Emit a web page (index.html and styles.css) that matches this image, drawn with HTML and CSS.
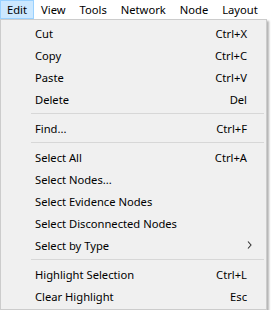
FILE: index.html
```html
<!DOCTYPE html>
<html lang="en">

<head>
    <meta charset="UTF-8">
    <title>Edit Menu</title>
    <link rel="stylesheet" href="styles.css">
</head>

<body>
    <div class="menubar">
        <span class="top-item active">Edit</span>
        <span class="top-item">View</span>
        <span class="top-item">Tools</span>
        <span class="top-item">Network</span>
        <span class="top-item">Node</span>
        <span class="top-item">Layout</span>
    </div>

    <div class="dropdown">
        <div class="item"><span>Cut</span><span class="key">Ctrl+X</span></div>
        <div class="item"><span>Copy</span><span class="key">Ctrl+C</span></div>
        <div class="item"><span>Paste</span><span class="key">Ctrl+V</span></div>
        <div class="item"><span>Delete</span><span class="key">Del</span></div>
        <div class="sep"></div>
        <div class="item"><span>Find...</span><span class="key">Ctrl+F</span></div>
        <div class="sep"></div>
        <div class="item"><span>Select All</span><span class="key">Ctrl+A</span></div>
        <div class="item"><span>Select Nodes...</span></div>
        <div class="item"><span>Select Evidence Nodes</span></div>
        <div class="item"><span>Select Disconnected Nodes</span></div>
        <div class="item"><span>Select by Type</span>
            <svg class="arrow" width="5" height="8" viewBox="0 0 5 8">
                <path d="M1 0.5 L4 4 L1 7.5" fill="none" stroke="#333" stroke-width="1.1"/>
            </svg>
        </div>
        <div class="sep"></div>
        <div class="item"><span>Highlight Selection</span><span class="key">Ctrl+L</span></div>
        <div class="item"><span>Clear Highlight</span><span class="key">Esc</span></div>
    </div>
</body>

</html>
```

FILE: styles.css
```css
body {
    margin: 0;
    background: #ffffff;
    font-family: 'Noto Sans', 'Open Sans', sans-serif;
    font-size: 11.2px;
    color: #000;
}

.menubar {
    display: flex;
    height: 19px;
    background: #ffffff;
}

.top-item {
    display: flex;
    align-items: center;
    padding: 0 6px 1px;
    height: 19px;
    box-sizing: border-box;
    border: 1px solid transparent;
}

.top-item.active {
    background: #cce8ff;
    border-color: #99d1ff;
}

.dropdown {
    width: 267px;
    box-sizing: border-box;
    padding: 2px 2px;
    background: #f0f0f0;
    border: 1px solid #cccccc;
    box-shadow: 2px 2px 2px rgba(0, 0, 0, 0.3);
}

.item {
    display: flex;
    align-items: center;
    justify-content: space-between;
    height: 22px;
    padding: 0 17px 0 32px;
}

.key {
    text-align: right;
}

.arrow {
    margin-right: -5px;
}

.sep {
    height: 1px;
    margin: 3px 0 3px 28px;
    background: #d7d7d7;
}
```
